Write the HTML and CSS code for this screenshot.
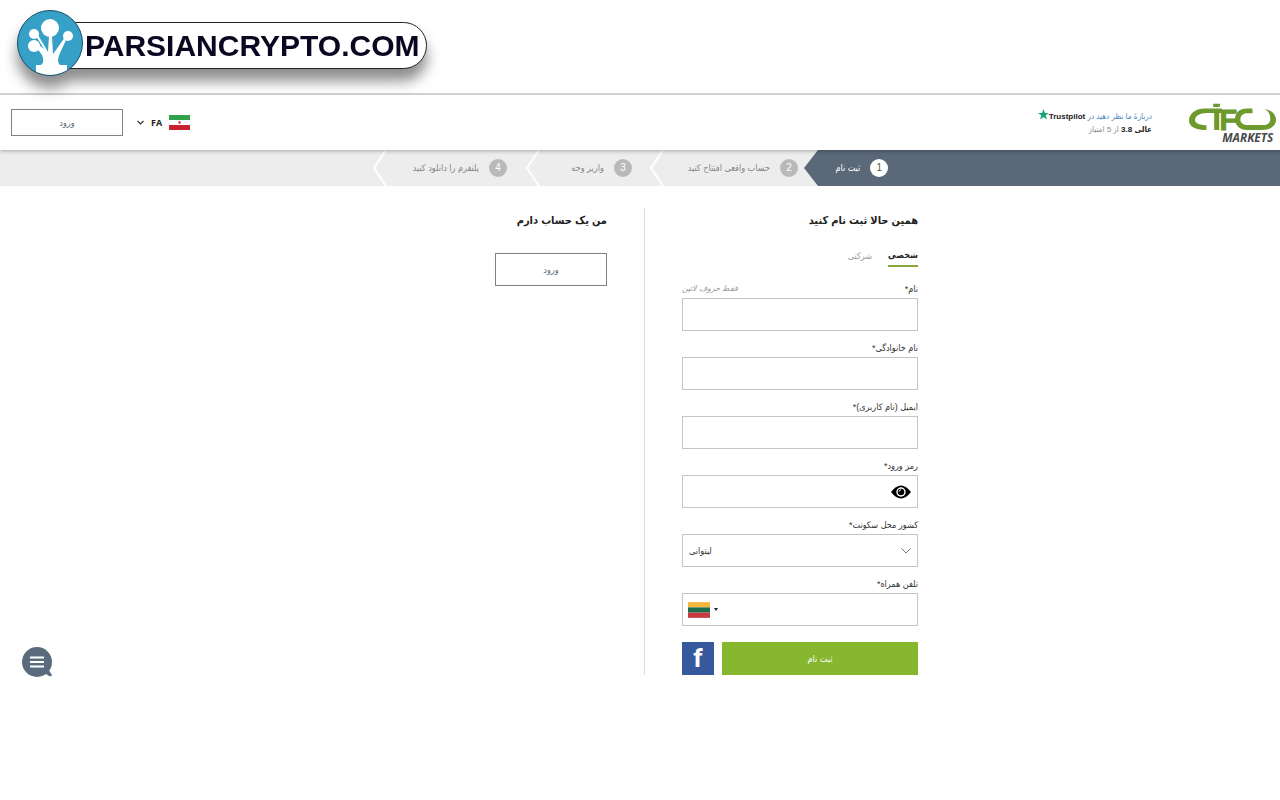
FILE: index.html
```html
<!DOCTYPE html>
<html lang="fa" dir="rtl">
<head>
<meta charset="utf-8">
<meta name="viewport" content="width=device-width, initial-scale=1">
<title>IFC Markets</title>
<link rel="stylesheet" href="styles.css">
</head>
<body>
<div class="banner" dir="ltr">
  <a class="brand" href="#">
    <svg class="brand-mark" viewBox="0 0 66 68" aria-hidden="true">
      <defs><clipPath id="disc"><circle cx="33" cy="34" r="32"/></clipPath></defs>
      <circle cx="33" cy="34" r="32.500" fill="#37a0c6" stroke="#17506b" stroke-width="1"/>
      <g clip-path="url(#disc)" fill="#fff">
        <circle cx="33" cy="19" r="9"/>
        <circle cx="17" cy="25" r="5"/>
        <circle cx="17" cy="37" r="6"/>
        <circle cx="51" cy="27" r="5"/>
        <path d="M19 56h5q4-2 1-10l-6-8 3-2 5 4L19 27l2-1 10 17 1-16h3l1 18 3-4 9-13 2 1-7 15q-4 9 0 12h7v14H19z"/>
      </g>
    </svg>
    <span class="brand-name">PARSIANCRYPTO.COM</span>
  </a>
</div>

<header class="header">
  <a class="logo" href="#" aria-label="IFC Markets" dir="ltr">
    <svg viewBox="505 38 262 118" aria-hidden="true">
      <g fill="#6d9a2d">
        <path d="M606 54H555C525 54 508 72 508 90C508 108 530 118 560 118V104C540 103 526 98 526 88C526 76 540 67 560 67H606z"/>
        <path d="M580 40h21l-2 9h-19zM583 60h15v58h-15z"/>
        <path d="M697 54H680C655 54 645 70 645 86C645 104 660 118 680 118H725C752 118 767 104 767 88C767 70 752 58 735 56C746 64 750 72 750 84C750 96 742 103 728 103H685C668 103 661 96 661 87C661 76 668 68 682 68H697z"/>
      </g>
      <text class="logo-letter" x="599" y="117">F</text>
      <text class="logo-name" x="607" y="153">MARKETS</text>
    </svg>
  </a>
  <div class="rating">
    <p><a href="#">دربارهٔ ما نظر دهید در</a> <b dir="ltr"><svg class="star" viewBox="0 0 24 24" aria-hidden="true"><path d="M12 0l3 8.500h9l-7.200 5.400L19.500 23 12 17.500 4.500 23l2.700-9.100L0 8.500h9z" fill="#12a577"/></svg>Trustpilot</b></p>
    <p class="score"><b>عالی 3.8</b> از 5 امتیاز</p>
  </div>
  <button class="language" type="button">
    <svg class="flag" viewBox="0 0 21 15" aria-hidden="true"><path fill="#fff" d="M0 0h21v15H0z"/><path fill="#32a14c" d="M0 0h21v5H0z"/><path fill="#c9212f" d="M0 10h21v5H0z"/><path fill="#d43f47" d="M9 7l1.500-1L12 7l-1 2h-1z"/></svg>
    <span>FA</span>
    <svg class="caret" viewBox="0 0 7 5" aria-hidden="true"><path d="M.5 1l3 3 3-3" fill="none" stroke="#333" stroke-width="1.200"/></svg>
  </button>
  <button class="outline compact" type="button">ورود</button>
</header>

<ol class="steps">
  <li class="step current"><span class="num">1</span>ثبت نام</li>
  <li class="tip"><svg viewBox="0 0 14 36" aria-hidden="true"><path d="M14 0L0 18l14 18z" fill="#5a6878"/></svg></li>
  <li class="step second"><span class="num">2</span>حساب واقعی افتتاح کنید</li>
  <li class="tip"><svg viewBox="0 0 14 36" aria-hidden="true"><path d="M13 0L1 18l12 18" fill="none" stroke="#fff" stroke-width="2"/></svg></li>
  <li class="step third"><span class="num">3</span>واریز وجه</li>
  <li class="tip"><svg viewBox="0 0 14 36" aria-hidden="true"><path d="M13 0L1 18l12 18" fill="none" stroke="#fff" stroke-width="2"/></svg></li>
  <li class="step fourth"><span class="num">4</span>پلتفرم را دانلود کنید</li>
  <li class="tip"><svg viewBox="0 0 14 36" aria-hidden="true"><path d="M13 0L1 18l12 18" fill="none" stroke="#fff" stroke-width="2"/></svg></li>
</ol>

<main class="main">
  <section class="register">
    <form class="form">
      <h1>همین حالا ثبت نام کنید</h1>
      <div class="tabs">
        <button class="tab active" type="button">شخصی</button>
        <button class="tab" type="button">شرکتی</button>
      </div>
      <div class="field">
        <div class="caption"><label for="first">نام*</label><i>فقط حروف لاتین</i></div>
        <input id="first" type="text">
      </div>
      <div class="field">
        <div class="caption"><label for="last">نام خانوادگی*</label></div>
        <input id="last" type="text">
      </div>
      <div class="field">
        <div class="caption"><label for="email">ایمیل (نام کاربری)*</label></div>
        <input id="email" type="email">
      </div>
      <div class="field">
        <div class="caption"><label for="password">رمز ورود*</label></div>
        <div class="control">
          <input id="password" type="password">
          <button class="eye" type="button" aria-label="نمایش رمز">
            <svg viewBox="0 0 20 14" aria-hidden="true"><path d="M0 7Q10-6 20 7 10 20 0 7z" fill="#000"/><circle cx="10" cy="7" r="4.700" fill="#fff"/><circle cx="10" cy="7" r="3.300" fill="#000"/><path d="M8 6.500A2 2 0 0 1 10 4.800" stroke="#fff" fill="none"/></svg>
          </button>
        </div>
      </div>
      <div class="field">
        <div class="caption"><label for="country">کشور محل سکونت*</label></div>
        <div class="control">
          <select id="country"><option>لیتوانی</option></select>
          <svg class="arrow" viewBox="0 0 10 6" aria-hidden="true"><path d="M.5.5L5 5 9.500.5" fill="none" stroke="#777"/></svg>
        </div>
      </div>
      <div class="field">
        <div class="caption"><label for="phone">تلفن همراه*</label></div>
        <div class="control">
          <input id="phone" type="tel">
          <button class="dial" type="button" dir="ltr" aria-label="کد کشور">
            <svg class="flag-lt" viewBox="0 0 21 15" aria-hidden="true"><path fill="#f3b73c" d="M0 0h21v5H0z"/><path fill="#1c6b4b" d="M0 5h21v5H0z"/><path fill="#c63a40" d="M0 10h21v5H0z"/></svg>
            <svg class="dot" viewBox="0 0 4 3" aria-hidden="true"><path d="M0 0h4L2 3z" fill="#222"/></svg>
          </button>
        </div>
      </div>
      <div class="actions">
        <button class="submit" type="submit">ثبت نام</button>
        <button class="facebook" type="button" aria-label="Facebook">f</button>
      </div>
    </form>
  </section>
  <section class="login">
    <h2>من یک حساب دارم</h2>
    <button class="outline" type="button">ورود</button>
  </section>
</main>

<button class="chat" type="button" aria-label="گفتگو">
  <svg viewBox="0 0 30 30" aria-hidden="true"><circle cx="15" cy="15" r="15" fill="#5a6b7e"/><path d="M20 27l6-5 4 6q-1 2-3 1l-3-2z" fill="#5a6b7e"/><path d="M8 10.500h14M8 15h14M8 19.500h14" stroke="#fff" stroke-width="2"/></svg>
</button>
</body>
</html>
```

FILE: styles.css
```css
* { box-sizing: border-box; }
body {
  margin: 0;
  background: #fff;
  color: #333;
  font: 9px/12px "Liberation Sans", "DejaVu Sans Condensed", "DejaVu Sans", sans-serif;
}
button, input, select { font: inherit; color: inherit; margin: 0; }
button { background: none; border: 0; padding: 0; cursor: pointer; }
svg { display: block; }
p, h1, h2 { margin: 0; }
a { text-decoration: none; }

.banner { padding: 9px 17px 16px; border-bottom: 2px solid #dcdcdc; }
.brand {
  display: inline-flex;
  align-items: flex-end;
  vertical-align: top;
  filter: drop-shadow(0 12px 7px rgba(0, 0, 0, .45));
}
.brand-mark { width: 66px; height: 68px; z-index: 1; }
.brand-name {
  margin: 0 0 8px -16px;
  padding: 1px 7px 0 17px;
  border: 1px solid #222;
  border-radius: 0 24px 24px 0;
  background: #fff;
  color: #0a0820;
  font-size: 30px;
  font-weight: bold;
  line-height: 44px;
}

.header {
  position: relative;
  display: flex;
  align-items: center;
  height: 55px;
  padding: 0 4px 0 11px;
  box-shadow: 0 1px 4px rgba(0, 0, 0, .3);
}
.logo svg { width: 88px; height: 40px; }
.logo-letter {
  font: bold 86px "Liberation Sans", sans-serif;
  fill: #6d9a2d;
  stroke: #6d9a2d;
  stroke-width: 3px;
}
.logo-name { font: italic bold 35px "Open Sans", sans-serif; fill: #4a4a4a; }
.rating { margin-right: 36px; font-size: 8px; line-height: 13px; }
.rating a { color: #3f86c0; }
.rating b { color: #222; }
.score { color: #888; }
.star { display: inline-block; width: 11px; height: 11px; vertical-align: -1px; }
.language {
  display: flex;
  align-items: center;
  gap: 7px;
  margin-right: auto;
  margin-left: 14px;
  color: #222;
  font: bold 9px/12px "Open Sans", sans-serif;
}
.flag { width: 21px; height: 15px; }
.caret { width: 7px; height: 5px; }
.outline {
  width: 112px;
  height: 33px;
  border: 1px solid #7a828a;
  background: #fff;
  color: #5a6878;
}
.compact { height: 27px; }

.steps {
  display: flex;
  height: 36px;
  margin: 0;
  padding: 0;
  list-style: none;
  background: #ededed;
  color: #858585;
  white-space: nowrap;
}
.step { display: flex; align-items: center; gap: 10px; flex: none; }
.current { width: 36.100%; justify-content: flex-start; padding-right: 30.600%; background: #5a6878; color: #fff; }
.second { width: 140px; padding-right: 6px; }
.third { width: 110px; padding-right: 18px; }
.fourth { width: 139px; padding-right: 19px; }
.tip { flex: none; width: 14px; }
.tip svg { width: 14px; height: 36px; }
.num {
  flex: none;
  width: 18px;
  border-radius: 50%;
  background: #b9b9b9;
  color: #fff;
  font-size: 10px;
  line-height: 18px;
  text-align: center;
}
.current .num { background: #fff; color: #555; }

.main {
  display: grid;
  grid-template-columns: 1fr 1fr;
  padding: 22px 0 0 8px;
}
.main section { padding: 0 37px; }
.main .register { display: flex; justify-content: flex-end; border-left: 1px solid #dcdcdc; }
.form { width: 236px; }
h1, h2 { color: #222; font-size: 11px; line-height: 24px; }
.tabs { display: flex; gap: 16px; margin-top: 16px; }
.tab { height: 19px; padding-bottom: 4px; color: #999; }
.active { border-bottom: 2px solid #86a83c; color: #222; font-weight: bold; }
.field { margin-bottom: 9px; }
.tabs + .field { margin-top: 14px; }
.caption { display: flex; justify-content: space-between; height: 17px; line-height: 16px; }
.caption i { color: #999; font-size: 8px; }
.field input, .field select {
  display: block;
  width: 100%;
  height: 33px;
  padding: 0 6px;
  border: 1px solid #c4c4c4;
  border-radius: 0;
  background: #fff;
}
.field select { appearance: none; direction: ltr; text-align: left; }
.control { position: relative; }
.eye, .arrow, .dial { position: absolute; top: 0; bottom: 0; margin: auto; }
.eye { right: 7px; height: 14px; }
.eye svg { width: 20px; height: 14px; }
.arrow { right: 7px; width: 10px; height: 6px; pointer-events: none; }
.dial { left: 6px; display: flex; align-items: center; gap: 4px; }
.flag-lt { width: 22px; height: 16px; }
.dot { width: 4px; height: 3px; }
.actions { display: flex; gap: 8px; margin-top: 16px; }
.submit { flex: 1; height: 33px; background: #86b72f; color: #fff; }
.facebook {
  width: 32px;
  height: 33px;
  background: #36589d;
  color: #fff;
  font: bold 26px/33px Roboto, sans-serif;
}
.login .outline { display: block; margin-top: 21px; }

.chat { position: fixed; left: 22px; bottom: 123px; }
.chat svg { width: 30px; height: 30px; }
```
